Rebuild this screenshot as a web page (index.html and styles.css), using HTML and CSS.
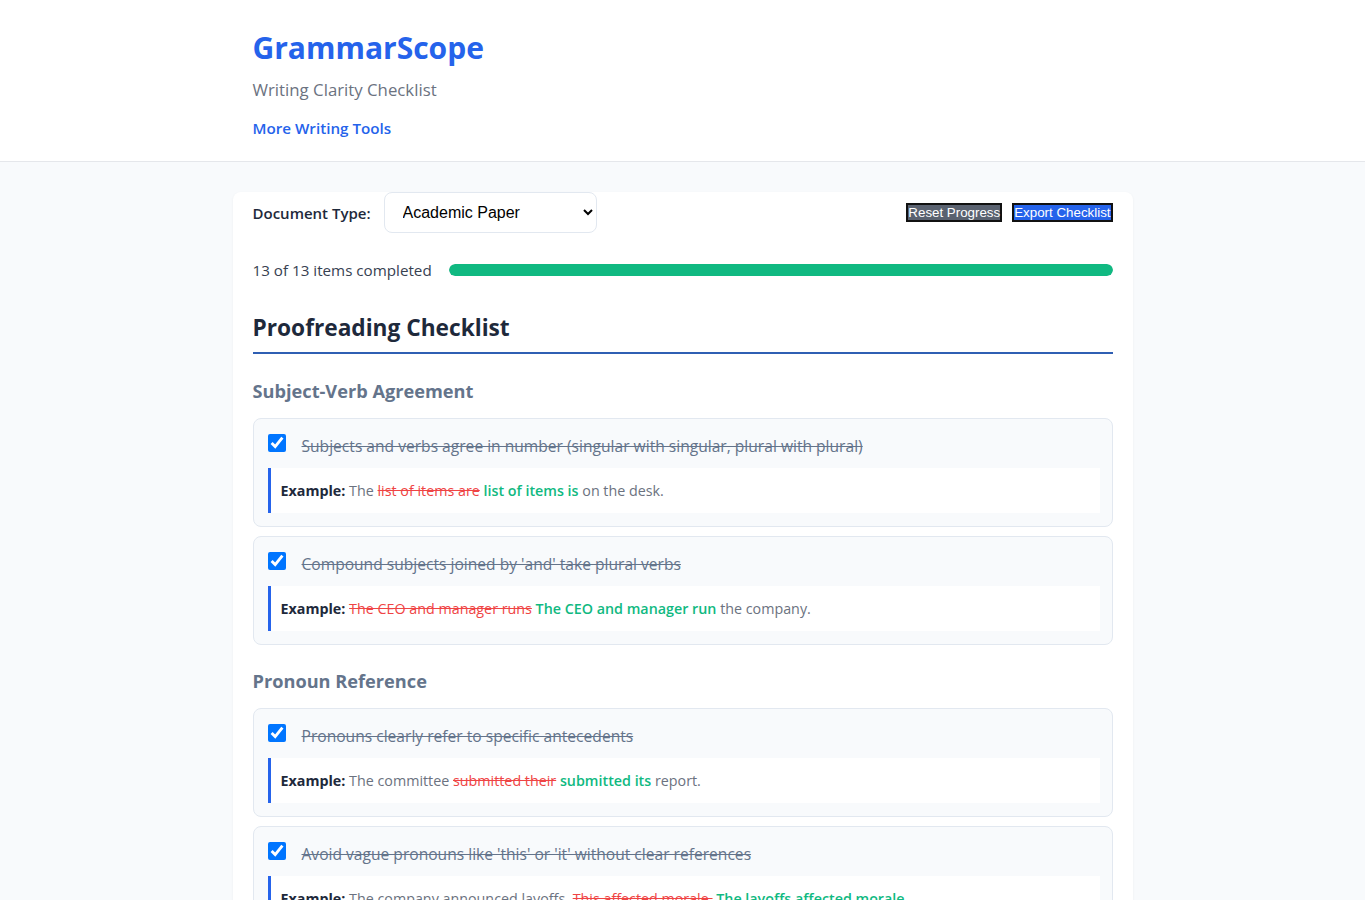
FILE: index.html
```html
<!DOCTYPE html>
<html lang="en">

<head>
    <meta charset="UTF-8">
    <meta name="viewport" content="width=device-width, initial-scale=1.0">
    <title>GrammarScope - Writing Clarity Checklist</title>
    <link rel="stylesheet" href="styles.css">
</head>

<body>
    <header class="site-header">
        <div class="header-inner">
            <h1 class="brand">GrammarScope</h1>
            <p class="tagline">Writing Clarity Checklist</p>
            <a href="#" class="more-link">More Writing Tools</a>
        </div>
    </header>

    <main class="checklist-card">
        <div class="controls">
            <label for="docType" class="doc-label">Document Type:</label>
            <select id="docType" class="doc-select">
                <option selected>Academic Paper</option>
                <option>Business Email</option>
                <option>Blog Post</option>
                <option>Cover Letter</option>
            </select>
            <div class="actions">
                <button class="btn btn-reset">Reset Progress</button>
                <button class="btn btn-export">Export Checklist</button>
            </div>
        </div>

        <div class="progress-row">
            <span class="progress-text">13 of 13 items completed</span>
            <div class="progress-track">
                <div class="progress-fill" style="width: 100%"></div>
            </div>
        </div>

        <h2 class="checklist-title">Proofreading Checklist</h2>

        <section class="group">
            <h3 class="group-title">Subject-Verb Agreement</h3>
            <div class="item">
                <label class="item-row">
                    <input type="checkbox" checked>
                    <span class="item-text">Subjects and verbs agree in number (singular with singular, plural with plural)</span>
                </label>
                <div class="example"><b>Example:</b> The <span class="wrong">list of items are</span> <span class="right">list of items is</span> on the desk.</div>
            </div>
            <div class="item">
                <label class="item-row">
                    <input type="checkbox" checked>
                    <span class="item-text">Compound subjects joined by 'and' take plural verbs</span>
                </label>
                <div class="example"><b>Example:</b> <span class="wrong">The CEO and manager runs</span> <span class="right">The CEO and manager run</span> the company.</div>
            </div>
        </section>

        <section class="group">
            <h3 class="group-title">Pronoun Reference</h3>
            <div class="item">
                <label class="item-row">
                    <input type="checkbox" checked>
                    <span class="item-text">Pronouns clearly refer to specific antecedents</span>
                </label>
                <div class="example"><b>Example:</b> The committee <span class="wrong">submitted their</span> <span class="right">submitted its</span> report.</div>
            </div>
            <div class="item">
                <label class="item-row">
                    <input type="checkbox" checked>
                    <span class="item-text">Avoid vague pronouns like 'this' or 'it' without clear references</span>
                </label>
                <div class="example"><b>Example:</b> The company announced layoffs. <span class="wrong">This affected morale.</span> <span class="right">The layoffs affected morale.</span></div>
            </div>
        </section>

        <section class="group">
            <h3 class="group-title">Punctuation</h3>
            <div class="item">
                <label class="item-row">
                    <input type="checkbox" checked>
                    <span class="item-text">Commas separate items in a series and introductory phrases</span>
                </label>
                <div class="example"><b>Example:</b> <span class="wrong">After lunch we left</span> <span class="right">After lunch, we left</span> for the museum.</div>
            </div>
            <div class="item">
                <label class="item-row">
                    <input type="checkbox" checked>
                    <span class="item-text">No comma splices between independent clauses</span>
                </label>
                <div class="example"><b>Example:</b> <span class="wrong">It rained, we stayed in.</span> <span class="right">It rained, so we stayed in.</span></div>
            </div>
            <div class="item">
                <label class="item-row">
                    <input type="checkbox" checked>
                    <span class="item-text">Apostrophes used correctly for possession and contractions</span>
                </label>
                <div class="example"><b>Example:</b> <span class="wrong">The dog wagged it's tail</span> <span class="right">The dog wagged its tail</span> happily.</div>
            </div>
        </section>

        <section class="group">
            <h3 class="group-title">Parallel Structure</h3>
            <div class="item">
                <label class="item-row">
                    <input type="checkbox" checked>
                    <span class="item-text">Items in a list share the same grammatical form</span>
                </label>
                <div class="example"><b>Example:</b> She likes <span class="wrong">reading, writing, and to swim</span> <span class="right">reading, writing, and swimming</span>.</div>
            </div>
            <div class="item">
                <label class="item-row">
                    <input type="checkbox" checked>
                    <span class="item-text">Paired ideas use matching structures</span>
                </label>
                <div class="example"><b>Example:</b> <span class="wrong">Not only fast but also is cheap</span> <span class="right">Not only fast but also cheap</span>.</div>
            </div>
        </section>

        <section class="group">
            <h3 class="group-title">Modifiers</h3>
            <div class="item">
                <label class="item-row">
                    <input type="checkbox" checked>
                    <span class="item-text">No dangling or misplaced modifiers</span>
                </label>
                <div class="example"><b>Example:</b> <span class="wrong">Walking home, the rain started.</span> <span class="right">Walking home, I noticed the rain start.</span></div>
            </div>
            <div class="item">
                <label class="item-row">
                    <input type="checkbox" checked>
                    <span class="item-text">Limiting words like 'only' sit next to what they modify</span>
                </label>
                <div class="example"><b>Example:</b> She <span class="wrong">only ate</span> <span class="right">ate only</span> one cookie.</div>
            </div>
        </section>

        <section class="group">
            <h3 class="group-title">Verb Tense</h3>
            <div class="item">
                <label class="item-row">
                    <input type="checkbox" checked>
                    <span class="item-text">Tense stays consistent within paragraphs</span>
                </label>
                <div class="example"><b>Example:</b> He opened the door and <span class="wrong">walks</span> <span class="right">walked</span> inside.</div>
            </div>
            <div class="item">
                <label class="item-row">
                    <input type="checkbox" checked>
                    <span class="item-text">Research findings use the appropriate tense</span>
                </label>
                <div class="example"><b>Example:</b> Smith (2019) <span class="wrong">finds</span> <span class="right">found</span> a strong correlation.</div>
            </div>
        </section>
    </main>
</body>

</html>
```

FILE: styles.css
```css
* {
    margin: 0;
    padding: 0;
    box-sizing: border-box;
}

body {
    font-family: "Segoe UI", "Open Sans", "Noto Sans", sans-serif;
    background-color: #f8fafc;
    color: #1e293b;
}

.site-header {
    background-color: #fff;
    border-bottom: 1px solid #e5e7eb;
    padding: 29px 0 21px;
}

.header-inner {
    max-width: 860px;
    margin: 0 auto;
}

.brand {
    font-size: 30px;
    line-height: 38px;
    font-weight: 700;
    color: #2563eb;
}

.tagline {
    margin-top: 9px;
    font-size: 16.8px;
    line-height: 27px;
    color: #6b7280;
}

.more-link {
    display: inline-block;
    margin-top: 13px;
    font-size: 15.2px;
    line-height: 24px;
    font-weight: 600;
    color: #2563eb;
    text-decoration: none;
}

.checklist-card {
    max-width: 900px;
    margin: 30px auto;
    padding: 0 20px 20px;
    background-color: #fff;
    border-radius: 8px;
    box-shadow: 0 1px 3px rgba(15, 23, 42, 0.05);
}

.controls {
    display: flex;
    align-items: center;
}

.doc-label {
    font-size: 15px;
    font-weight: 600;
    color: #1e293b;
    margin-right: 13px;
}

.doc-select {
    width: 213px;
    height: 41px;
    padding: 0 14px;
    font-family: "Liberation Sans", Arial, sans-serif;
    font-size: 16px;
    color: #000;
    background-color: #fff;
    border: 1px solid #e2e8f0;
    border-radius: 8px;
}

.actions {
    margin-left: auto;
    display: flex;
    gap: 10px;
}

.btn {
    font-family: "Liberation Sans", Arial, sans-serif;
    font-size: 13.33px;
    line-height: 15px;
    padding: 0;
    border: 2px solid #111;
    color: #fff;
    cursor: pointer;
}

.btn-reset {
    background-color: #5a6270;
}

.btn-export {
    background-color: #2563eb;
}

.progress-row {
    display: flex;
    align-items: center;
    gap: 17px;
    margin-top: 25px;
}

.progress-text {
    font-size: 15.2px;
    line-height: 24px;
    color: #374151;
    white-space: nowrap;
}

.progress-track {
    flex-grow: 1;
    height: 12px;
    background-color: #e5e7eb;
    border-radius: 6px;
    overflow: hidden;
}

.progress-fill {
    height: 100%;
    background-color: #10b981;
    border-radius: 6px;
}

.checklist-title {
    margin: 31px 0 26px;
    padding-bottom: 10px;
    font-size: 22.7px;
    line-height: 29px;
    font-weight: 700;
    color: #1e293b;
    border-bottom: 2px solid #2f5fb3;
}

.group-title {
    margin: 25px 0 15px;
    font-size: 18.2px;
    line-height: 23px;
    font-weight: 700;
    color: #64748b;
}

.item {
    background-color: #f8fafc;
    border: 1px solid #e2e8f0;
    border-radius: 8px;
    padding: 15px 12px 13px 14px;
    margin-bottom: 9px;
}

.item-row {
    display: flex;
    align-items: flex-start;
    gap: 16px;
    cursor: pointer;
}

.item-row input {
    width: 18px;
    height: 18px;
    margin: 0;
    flex-shrink: 0;
}

.item-text {
    font-size: 15.6px;
    line-height: 24px;
    color: #64748b;
    text-decoration: line-through;
}

.example {
    margin-top: 10px;
    padding: 12px 12px 12px 10px;
    background-color: #fff;
    border-left: 3px solid #2563eb;
    font-size: 14.3px;
    line-height: 21px;
    color: #6b7280;
}

.example b {
    font-weight: 700;
    color: #1e293b;
}

.wrong {
    color: #ef4444;
    text-decoration: line-through;
}

.right {
    color: #10b981;
    font-weight: 600;
}
```
